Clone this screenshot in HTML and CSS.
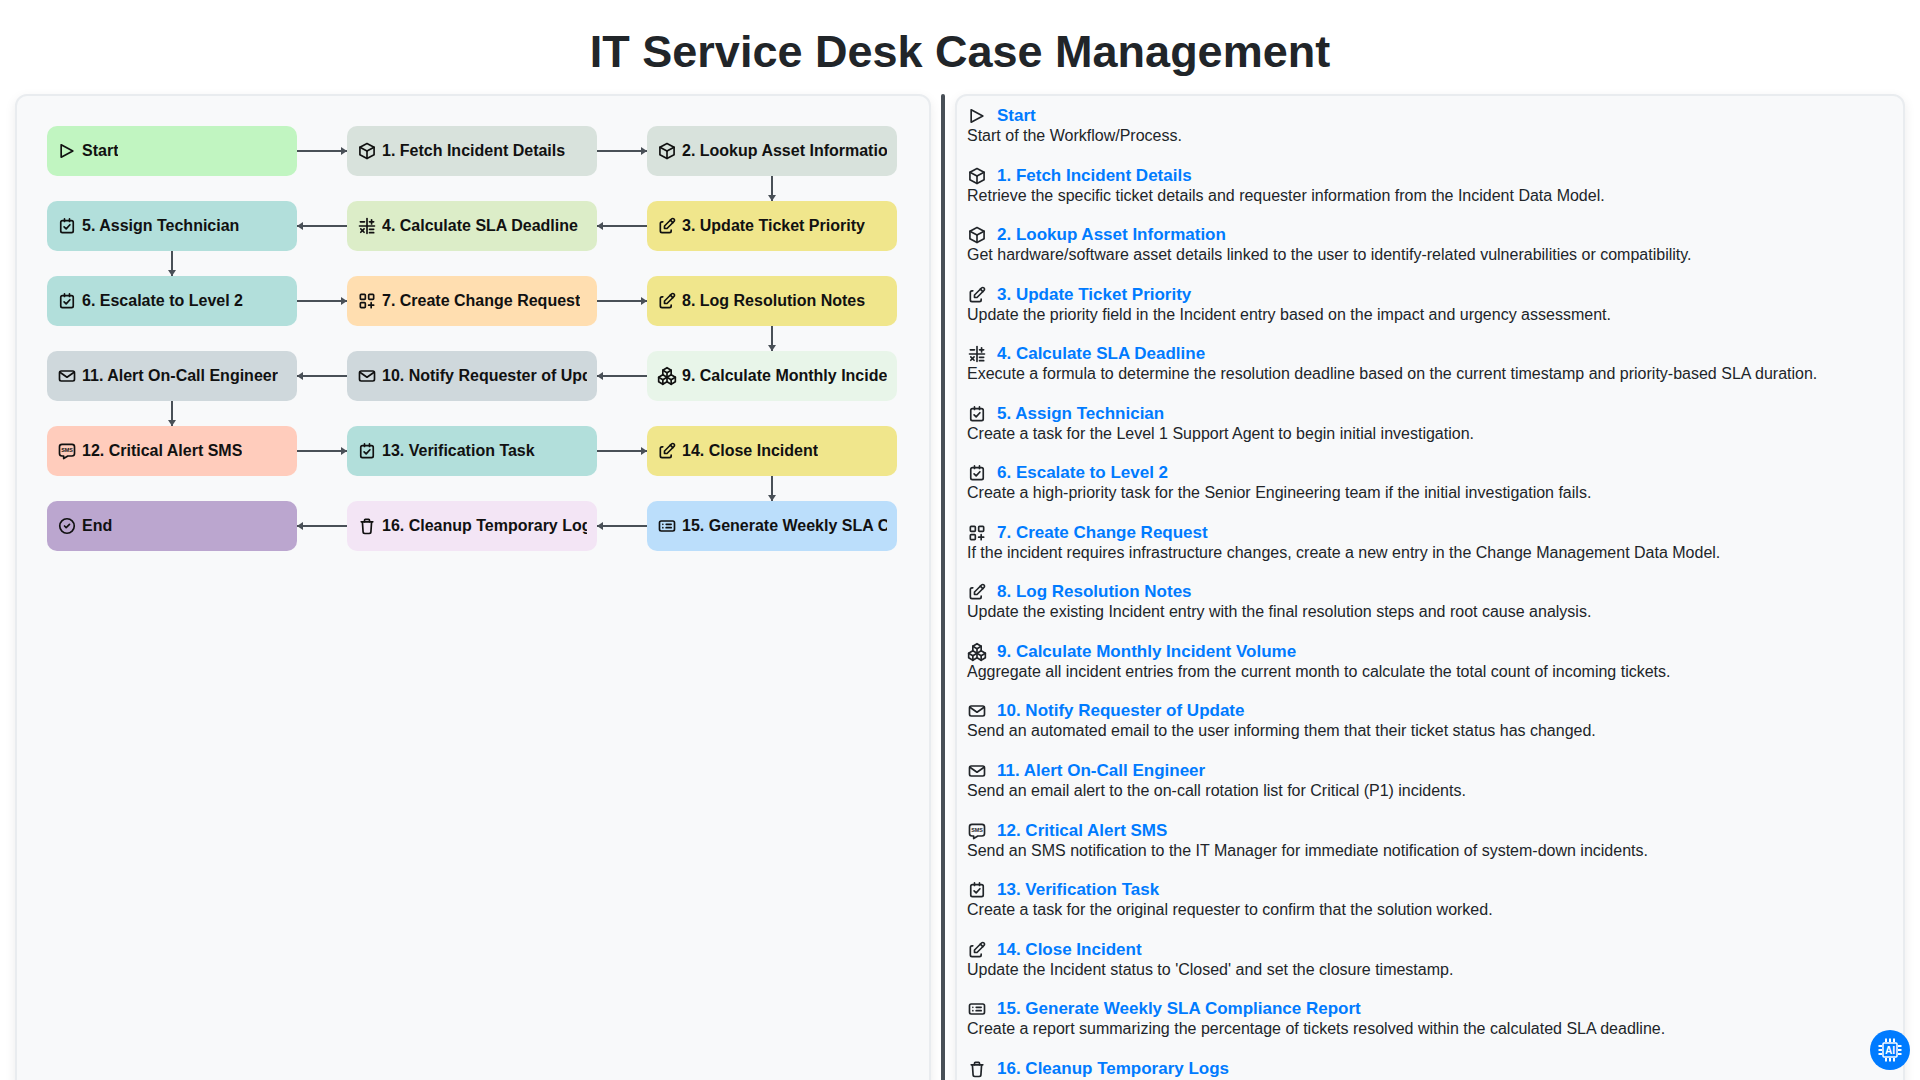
FILE: index.html
```html
<!DOCTYPE html>
<html lang="en">
<head>
    <meta charset="UTF-8">
    <title>IT Service Desk Case Management</title>
    <link rel="stylesheet" href="styles.css">
</head>
<body>
    <svg class="icon-defs" xmlns="http://www.w3.org/2000/svg" width="0" height="0">
        <symbol id="i-play" viewBox="0 0 24 24"><path d="M5 4.500v15l14 -7.500z"/></symbol>
        <symbol id="i-box" viewBox="0 0 24 24"><path d="M12 3l8.500 4.500v9l-8.500 4.500l-8.500 -4.500v-9z"/><path d="M12 12l8.500 -4.500"/><path d="M12 12v9"/><path d="M12 12l-8.500 -4.500"/></symbol>
        <symbol id="i-edit" viewBox="0 0 24 24"><path d="M7 7h-1a2 2 0 0 0 -2 2v9a2 2 0 0 0 2 2h9a2 2 0 0 0 2 -2v-1"/><path d="M20.385 6.585a2.100 2.100 0 0 0 -2.970 -2.970l-8.415 8.385v3h3l8.385 -8.415z"/><path d="M16 5l3 3"/></symbol>
        <symbol id="i-calc" viewBox="0 0 24 24"><path d="M3 12h18"/><path d="M12 3v18"/><path d="M4 7h5"/><path d="M15 7h5"/><path d="M17.500 4.500v5"/><path d="M4.500 15.500l4 4"/><path d="M8.500 15.500l-4 4"/><path d="M15 16h5"/><path d="M15 20h5"/></symbol>
        <symbol id="i-task" viewBox="0 0 24 24"><rect x="4.500" y="5.500" width="15" height="14.500" rx="2"/><path d="M9 3.500v3"/><path d="M15 3.500v3"/><path d="M8.500 13l2.500 2.500l4.500 -5"/></symbol>
        <symbol id="i-apps" viewBox="0 0 24 24"><rect x="4" y="4" width="6" height="6" rx="1"/><rect x="14" y="4" width="6" height="6" rx="1"/><rect x="4" y="14" width="6" height="6" rx="1"/><path d="M14 17h6"/><path d="M17 14v6"/></symbol>
        <symbol id="i-packages" viewBox="0 0 24 24"><path d="M7 16.500l-5 -3l5 -3l5 3v5.500l-5 3z"/><path d="M2 13.500v5.500l5 3"/><path d="M7 16.545l5 -3.030"/><path d="M17 16.500l-5 -3l5 -3l5 3v5.500l-5 3z"/><path d="M12 19l5 3"/><path d="M17 16.500l5 -3"/><path d="M12 13.500v-5.500l-5 -3l5 -3l5 3v5.500"/><path d="M7 5.030v5.455"/><path d="M12 8l5 -3"/></symbol>
        <symbol id="i-mail" viewBox="0 0 24 24"><rect x="3" y="6" width="18" height="12" rx="2"/><path d="M3.500 7.500l8.500 6l8.500 -6"/></symbol>
        <symbol id="i-sms" viewBox="0 0 24 24"><path d="M18 4a3 3 0 0 1 3 3v8a3 3 0 0 1 -3 3h-5l-5 3v-3h-2a3 3 0 0 1 -3 -3v-8a3 3 0 0 1 3 -3z"/><text x="12" y="13.500" class="sms-text">SMS</text></symbol>
        <symbol id="i-report" viewBox="0 0 24 24"><rect x="3" y="6" width="18" height="12" rx="2"/><path d="M7 10h.01"/><path d="M11 10h6"/><path d="M7 14h.01"/><path d="M11 14h6"/></symbol>
        <symbol id="i-trash" viewBox="0 0 24 24"><path d="M5 7h14"/><path d="M9 7v-2a1 1 0 0 1 1 -1h4a1 1 0 0 1 1 1v2"/><path d="M6.500 7l.8 12a2 2 0 0 0 2 2h5.400a2 2 0 0 0 2 -2l.8 -12"/></symbol>
        <symbol id="i-end" viewBox="0 0 24 24"><circle cx="12" cy="12" r="8.700"/><path d="M9 12l2 2l4 -4"/></symbol>
    </svg>

    <h1 class="page-title">IT Service Desk Case Management</h1>

    <div class="layout">
        <div class="panel flow-panel">
            <div class="flow-row">
                <div class="node c-start"><svg class="icon"><use href="#i-play"/></svg><span class="node-text">Start</span></div>
                <div class="arrow"></div>
                <div class="node c-data"><svg class="icon"><use href="#i-box"/></svg><span class="node-text">1. Fetch Incident Details</span></div>
                <div class="arrow"></div>
                <div class="node c-data"><svg class="icon"><use href="#i-box"/></svg><span class="node-text">2. Lookup Asset Information</span></div>
            </div>
            <div class="flow-link link-right"><div class="arrow-down"></div></div>
            <div class="flow-row">
                <div class="node c-task"><svg class="icon"><use href="#i-task"/></svg><span class="node-text">5. Assign Technician</span></div>
                <div class="arrow arrow-back"></div>
                <div class="node c-calc"><svg class="icon"><use href="#i-calc"/></svg><span class="node-text">4. Calculate SLA Deadline</span></div>
                <div class="arrow arrow-back"></div>
                <div class="node c-update"><svg class="icon"><use href="#i-edit"/></svg><span class="node-text">3. Update Ticket Priority</span></div>
            </div>
            <div class="flow-link"><div class="arrow-down"></div></div>
            <div class="flow-row">
                <div class="node c-task"><svg class="icon"><use href="#i-task"/></svg><span class="node-text">6. Escalate to Level 2</span></div>
                <div class="arrow"></div>
                <div class="node c-create"><svg class="icon"><use href="#i-apps"/></svg><span class="node-text">7. Create Change Request</span></div>
                <div class="arrow"></div>
                <div class="node c-update"><svg class="icon"><use href="#i-edit"/></svg><span class="node-text">8. Log Resolution Notes</span></div>
            </div>
            <div class="flow-link link-right"><div class="arrow-down"></div></div>
            <div class="flow-row">
                <div class="node c-mail"><svg class="icon"><use href="#i-mail"/></svg><span class="node-text">11. Alert On-Call Engineer</span></div>
                <div class="arrow arrow-back"></div>
                <div class="node c-mail"><svg class="icon"><use href="#i-mail"/></svg><span class="node-text">10. Notify Requester of Update</span></div>
                <div class="arrow arrow-back"></div>
                <div class="node c-agg"><svg class="icon"><use href="#i-packages"/></svg><span class="node-text">9. Calculate Monthly Incident Volume</span></div>
            </div>
            <div class="flow-link"><div class="arrow-down"></div></div>
            <div class="flow-row">
                <div class="node c-sms"><svg class="icon"><use href="#i-sms"/></svg><span class="node-text">12. Critical Alert SMS</span></div>
                <div class="arrow"></div>
                <div class="node c-task"><svg class="icon"><use href="#i-task"/></svg><span class="node-text">13. Verification Task</span></div>
                <div class="arrow"></div>
                <div class="node c-update"><svg class="icon"><use href="#i-edit"/></svg><span class="node-text">14. Close Incident</span></div>
            </div>
            <div class="flow-link link-right"><div class="arrow-down"></div></div>
            <div class="flow-row">
                <div class="node c-end"><svg class="icon"><use href="#i-end"/></svg><span class="node-text">End</span></div>
                <div class="arrow arrow-back"></div>
                <div class="node c-delete"><svg class="icon"><use href="#i-trash"/></svg><span class="node-text">16. Cleanup Temporary Logs</span></div>
                <div class="arrow arrow-back"></div>
                <div class="node c-report"><svg class="icon"><use href="#i-report"/></svg><span class="node-text">15. Generate Weekly SLA Compliance Report</span></div>
            </div>
        </div>

        <div class="splitter"></div>

        <div class="panel steps-panel">
            <div class="step">
                <div class="step-title"><svg class="icon step-icon"><use href="#i-play"/></svg>Start</div>
                <div class="step-desc">Start of the Workflow/Process.</div>
            </div>
            <div class="step">
                <div class="step-title"><svg class="icon step-icon"><use href="#i-box"/></svg>1. Fetch Incident Details</div>
                <div class="step-desc">Retrieve the specific ticket details and requester information from the Incident Data Model.</div>
            </div>
            <div class="step">
                <div class="step-title"><svg class="icon step-icon"><use href="#i-box"/></svg>2. Lookup Asset Information</div>
                <div class="step-desc">Get hardware/software asset details linked to the user to identify-related vulnerabilities or compatibility.</div>
            </div>
            <div class="step">
                <div class="step-title"><svg class="icon step-icon"><use href="#i-edit"/></svg>3. Update Ticket Priority</div>
                <div class="step-desc">Update the priority field in the Incident entry based on the impact and urgency assessment.</div>
            </div>
            <div class="step">
                <div class="step-title"><svg class="icon step-icon"><use href="#i-calc"/></svg>4. Calculate SLA Deadline</div>
                <div class="step-desc">Execute a formula to determine the resolution deadline based on the current timestamp and priority-based SLA duration.</div>
            </div>
            <div class="step">
                <div class="step-title"><svg class="icon step-icon"><use href="#i-task"/></svg>5. Assign Technician</div>
                <div class="step-desc">Create a task for the Level 1 Support Agent to begin initial investigation.</div>
            </div>
            <div class="step">
                <div class="step-title"><svg class="icon step-icon"><use href="#i-task"/></svg>6. Escalate to Level 2</div>
                <div class="step-desc">Create a high-priority task for the Senior Engineering team if the initial investigation fails.</div>
            </div>
            <div class="step">
                <div class="step-title"><svg class="icon step-icon"><use href="#i-apps"/></svg>7. Create Change Request</div>
                <div class="step-desc">If the incident requires infrastructure changes, create a new entry in the Change Management Data Model.</div>
            </div>
            <div class="step">
                <div class="step-title"><svg class="icon step-icon"><use href="#i-edit"/></svg>8. Log Resolution Notes</div>
                <div class="step-desc">Update the existing Incident entry with the final resolution steps and root cause analysis.</div>
            </div>
            <div class="step">
                <div class="step-title"><svg class="icon step-icon"><use href="#i-packages"/></svg>9. Calculate Monthly Incident Volume</div>
                <div class="step-desc">Aggregate all incident entries from the current month to calculate the total count of incoming tickets.</div>
            </div>
            <div class="step">
                <div class="step-title"><svg class="icon step-icon"><use href="#i-mail"/></svg>10. Notify Requester of Update</div>
                <div class="step-desc">Send an automated email to the user informing them that their ticket status has changed.</div>
            </div>
            <div class="step">
                <div class="step-title"><svg class="icon step-icon"><use href="#i-mail"/></svg>11. Alert On-Call Engineer</div>
                <div class="step-desc">Send an email alert to the on-call rotation list for Critical (P1) incidents.</div>
            </div>
            <div class="step">
                <div class="step-title"><svg class="icon step-icon"><use href="#i-sms"/></svg>12. Critical Alert SMS</div>
                <div class="step-desc">Send an SMS notification to the IT Manager for immediate notification of system-down incidents.</div>
            </div>
            <div class="step">
                <div class="step-title"><svg class="icon step-icon"><use href="#i-task"/></svg>13. Verification Task</div>
                <div class="step-desc">Create a task for the original requester to confirm that the solution worked.</div>
            </div>
            <div class="step">
                <div class="step-title"><svg class="icon step-icon"><use href="#i-edit"/></svg>14. Close Incident</div>
                <div class="step-desc">Update the Incident status to 'Closed' and set the closure timestamp.</div>
            </div>
            <div class="step">
                <div class="step-title"><svg class="icon step-icon"><use href="#i-report"/></svg>15. Generate Weekly SLA Compliance Report</div>
                <div class="step-desc">Create a report summarizing the percentage of tickets resolved within the calculated SLA deadline.</div>
            </div>
            <div class="step">
                <div class="step-title"><svg class="icon step-icon"><use href="#i-trash"/></svg>16. Cleanup Temporary Logs</div>
            </div>
        </div>
    </div>

    <div class="ai-button">
        <svg width="28" height="28" viewBox="0 0 28 28" fill="none" stroke="#fff" stroke-width="2">
            <rect x="7" y="7" width="14" height="14" rx="1" stroke-width="1.500"/>
            <path d="M10 2.500v3.500M14 2.500v3.500M18 2.500v3.500M10 22v3.500M14 22v3.500M18 22v3.500M2.500 10h3.500M2.500 14h3.500M2.500 18h3.500M22 10h3.500M22 14h3.500M22 18h3.500"/>
            <text x="14" y="17.500" class="ai-text">AI</text>
        </svg>
    </div>
</body>
</html>
```

FILE: styles.css
```css
body {
    font-family: "Liberation Sans", Arial, sans-serif;
    background-color: #fff;
    color: #212529;
    margin: 0;
    height: 100vh;
    overflow: hidden;
}

.icon-defs {
    position: absolute;
}

.page-title {
    font-size: 45px;
    font-weight: bold;
    text-align: center;
    color: #212529;
    margin: 26px 0 16px;
}

.layout {
    display: flex;
    align-items: stretch;
    height: 1000px;
    padding: 0 15px;
}

.panel {
    background-color: #f8f9fa;
    border: 2px solid #e9ecef;
    border-radius: 12px;
    box-shadow: 0 4px 12px rgba(0,0,0,0.08);
    box-sizing: border-box;
    min-width: 0;
}

.flow-panel {
    flex: 0 0 916px;
    padding: 30px 0 0 30px;
}

.splitter {
    flex: 0 0 4px;
    margin: 0 10px;
    background-color: #495057;
    border-radius: 2px 2px 0 0;
}

.steps-panel {
    flex: 1;
    padding: 9px 10px 0;
    overflow: hidden;
}

/* flow diagram */
.flow-row {
    display: flex;
}

.flow-link {
    display: flex;
    height: 25px;
    width: 850px;
    padding: 0 125px;
    box-sizing: border-box;
}

.link-right {
    justify-content: flex-end;
}

.node {
    display: flex;
    align-items: center;
    flex: 0 0 250px;
    min-width: 0;
    height: 50px;
    padding: 0 10px;
    box-sizing: border-box;
    border-radius: 10px;
    font-size: 16px;
    font-weight: bold;
    color: #111;
    white-space: nowrap;
}

.node-text {
    min-width: 0;
    overflow: hidden;
    margin-left: 5px;
    margin-top: -1px;
}

.icon {
    flex: none;
    width: 20px;
    height: 20px;
    fill: none;
    stroke: currentColor;
    stroke-width: 2;
    stroke-linecap: round;
    stroke-linejoin: round;
}

.arrow {
    position: relative;
    flex: 0 0 50px;
    height: 2px;
    align-self: center;
    background-color: #495057;
}

.arrow::after {
    content: "";
    position: absolute;
    right: 0;
    top: -3px;
    border-left: 6px solid #495057;
    border-top: 4px solid transparent;
    border-bottom: 4px solid transparent;
}

.arrow-back::after {
    right: auto;
    left: 0;
    border-left: none;
    border-right: 6px solid #495057;
}

.arrow-down {
    position: relative;
    width: 2px;
    height: 25px;
    margin-left: -1px;
    background-color: #495057;
}

.link-right .arrow-down {
    margin-left: 0;
    margin-right: -1px;
}

.arrow-down::after {
    content: "";
    position: absolute;
    left: -3px;
    bottom: 0;
    border-top: 6px solid #495057;
    border-left: 4px solid transparent;
    border-right: 4px solid transparent;
}

.c-start { background-color: #c1f5c1; }
.c-data { background-color: #d8e2dc; }
.c-update { background-color: #f0e68c; }
.c-calc { background-color: #dcedc8; }
.c-task { background-color: #b2dfdb; }
.c-create { background-color: #ffdeb0; }
.c-agg { background-color: #e8f5e9; }
.c-mail { background-color: #cfd8dc; }
.c-sms { background-color: #ffccbc; }
.c-report { background-color: #bbdefb; }
.c-delete { background-color: #f3e5f5; }
.c-end { background-color: #bba6cf; }

/* step list */
.step {
    margin-bottom: 19.55px;
}

.step-title {
    display: flex;
    align-items: center;
    height: 22px;
    font-size: 17px;
    font-weight: bold;
    color: #007bff;
}

.step-icon {
    margin: 0 10px 0 0;
    color: #212529;
}

.step-desc {
    font-size: 16px;
    color: #212529;
}

.sms-text {
    font-size: 6.500px;
    font-weight: bold;
    fill: currentColor;
    stroke: none;
    text-anchor: middle;
}

.ai-button {
    position: fixed;
    right: 10px;
    bottom: 10px;
    width: 40px;
    height: 40px;
    display: flex;
    align-items: center;
    justify-content: center;
    border-radius: 50%;
    background-color: #007bff;
}

.ai-text {
    font-size: 10px;
    font-weight: bold;
    fill: #fff;
    stroke: none;
    text-anchor: middle;
}
```
